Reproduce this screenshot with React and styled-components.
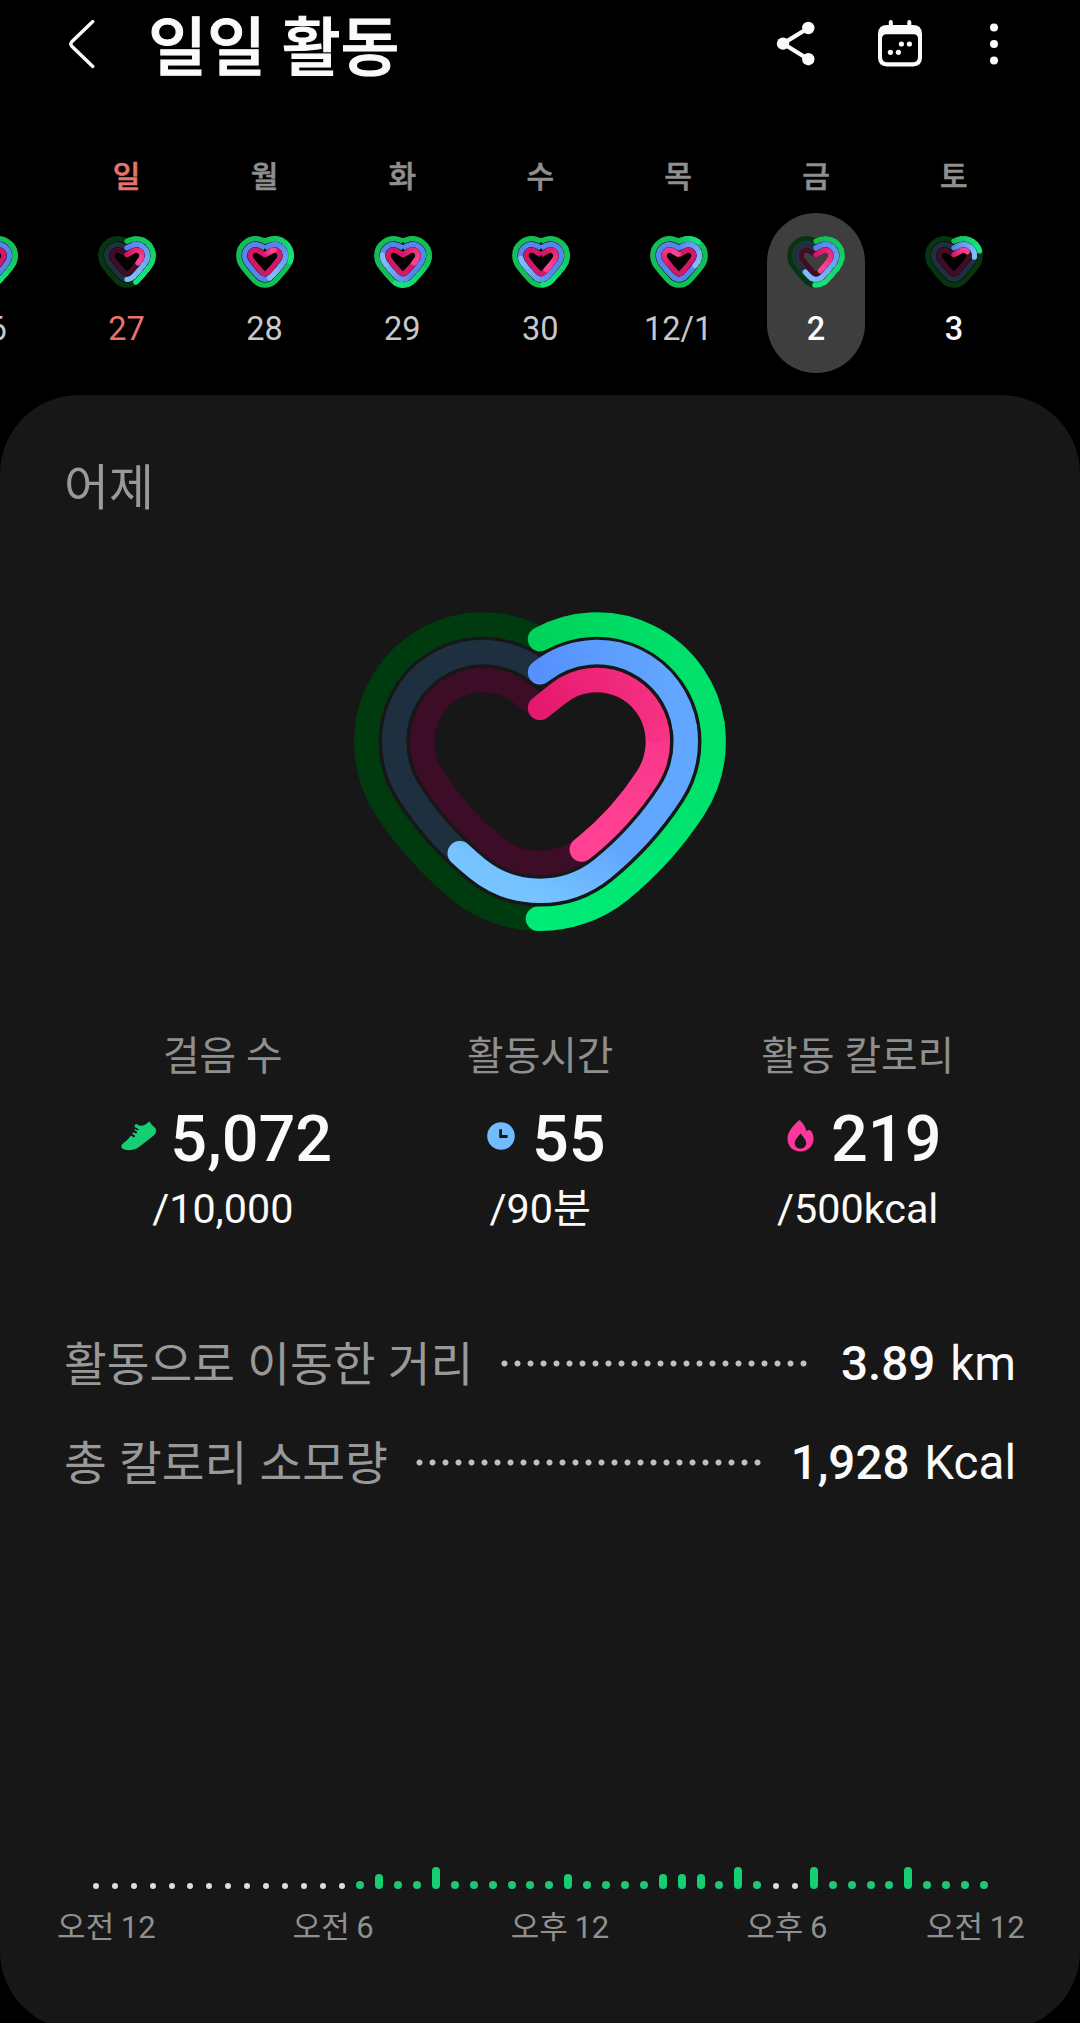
import styled, { createGlobalStyle, css } from 'styled-components';

const COLORS = {
  steps: { track: '#003b0f', from: '#00d259', mid: '#00e06b', to: '#00ea76' },
  time: { track: '#1e303f', from: '#5590fd', mid: '#62a7ff', to: '#76c3ff' },
  calories: { track: '#3d0c27', from: '#e3186c', mid: '#f93386', to: '#ff4093' },
};

const MINI_COLORS = {
  steps: { track: '#07350f', from: [19, 190, 86], to: [22, 226, 124] },
  time: { track: '#202f40', from: [84, 134, 238], to: [125, 190, 250] },
  calories: { track: '#3f0d28', from: [212, 24, 104], to: [250, 66, 146] },
};

const RINGS = ['steps', 'time', 'calories'];

const GRADIENTS = {
  steps: [300, 130, 230, 310],
  time: [266, 240, 232, 306],
  calories: [290, 90, 270, 220],
};

// The outline is a chain of arcs: lobe, side, flank and base.
// Every ring is the same chain moved inwards by its inset.
const BIG_HEART = {
  width: 372,
  height: 320,
  stroke: 24.4,
  lobe: [56.7, 129.2],
  lobeRadius: 129.2,
  sideRadius: 136,
  sideAngle: 33,
  flankRadius: 364,
  flankAngle: 51,
  insets: [12.2, 40.1, 68],
  tips: [27.2, 60.4, 96],
};

const MINI_HEART = {
  width: 58,
  height: 52,
  stroke: 5.3,
  lobe: [9.5, 19.5],
  lobeRadius: 19.5,
  sideRadius: 21,
  sideAngle: 36,
  flankRadius: 125,
  flankAngle: 45,
  insets: [2.8, 8.5, 14.1],
  tips: [5.2, 11.9, 18.7],
};

const polar = ([x, y], r, deg) => [
  x + r * Math.cos((deg * Math.PI) / 180),
  y + r * Math.sin((deg * Math.PI) / 180),
];

const heartPath = (shape, index) => {
  const cx = shape.width / 2;
  const inset = shape.insets[index];
  const tip = shape.tips[index];
  const [dx, cy] = shape.lobe;
  const lobe = shape.lobeRadius - inset;
  const side = shape.sideRadius - inset;
  const flank = shape.flankRadius - inset;

  // straight part between the tip and the lobe
  const dist = Math.hypot(dx, cy - tip);
  let joint = [0, tip];
  if (dist > lobe) {
    const angle = Math.atan2(cy - tip, dx) - Math.asin(lobe / dist);
    const len = Math.sqrt(dist * dist - lobe * lobe);
    joint = [Math.cos(angle) * len, tip + Math.sin(angle) * len];
  }

  const sideCenter = [dx + shape.lobeRadius - shape.sideRadius, cy];
  const a = polar(sideCenter, side, shape.sideAngle);
  const flankCenter = polar(a, -flank, shape.sideAngle);
  const b = polar(flankCenter, flank, shape.flankAngle);
  const base = b[0] / Math.cos((shape.flankAngle * Math.PI) / 180);

  const arc = (r, x, y) => `A${r} ${r} 0 0 1 ${cx + x} ${y}`;

  return [
    `M${cx} ${tip}`,
    `L${cx + joint[0]} ${joint[1]}`,
    arc(lobe, dx + lobe, cy),
    arc(side, a[0], a[1]),
    arc(flank, b[0], b[1]),
    arc(base, -b[0], b[1]),
    arc(flank, -a[0], a[1]),
    arc(side, -dx - lobe, cy),
    arc(lobe, -joint[0], joint[1]),
    `L${cx} ${tip}`,
  ].join('');
};

const BigHeart = ({ progress }) => (
  <HeartSvg width="372" height="320" viewBox="0 0 372 320">
    {RINGS.map((ring, i) => {
      const { track, from, mid, to } = COLORS[ring];
      const [x1, y1, x2, y2] = GRADIENTS[ring];
      const d = heartPath(BIG_HEART, i);

      return (
        <g key={ring} strokeWidth={BIG_HEART.stroke}>
          <defs>
            <radialGradient
              id={`${ring}-head`}
              gradientUnits="userSpaceOnUse"
              cx="180"
              cy={BIG_HEART.tips[i]}
              r="140"
            >
              <stop offset="0" stopColor={from} />
              <stop offset="1" stopColor={mid} />
            </radialGradient>
            <linearGradient
              id={`${ring}-tail`}
              gradientUnits="userSpaceOnUse"
              x1={x1}
              y1={y1}
              x2={x2}
              y2={y2}
            >
              <stop offset="0" stopColor={mid} />
              <stop offset="1" stopColor={to} />
            </linearGradient>
          </defs>
          <path d={d} stroke={track} />
          <path
            d={d}
            pathLength="100"
            stroke={`url(#${ring}-tail)`}
            strokeLinecap="round"
            strokeDasharray={`${progress[i] * 100 - 22} 200`}
            strokeDashoffset="-22"
          />
          <path
            d={d}
            pathLength="100"
            stroke={`url(#${ring}-head)`}
            strokeLinecap="round"
            strokeDasharray="22 200"
          />
        </g>
      );
    })}
  </HeartSvg>
);

const mix = (from, to, t) =>
  `rgb(${from.map((c, i) => Math.round(c + (to[i] - c) * t)).join(',')})`;

const STEPS = 8;

// Progress above 1 means the goal was passed and the ring runs over itself.
const MiniHeart = ({ progress }) => (
  <HeartSvg width="58" height="52" viewBox="0 0 58 52">
    {RINGS.map((ring, i) => {
      const { track, from, to } = MINI_COLORS[ring];
      const d = heartPath(MINI_HEART, i);
      const over = progress[i] > 1;
      const end = (over ? progress[i] - 1 : progress[i]) * 100;
      const start = over ? Math.max(0, end - 35) : 0;
      const part = (end - start) / STEPS;

      return (
        <g key={ring} strokeWidth={MINI_HEART.stroke}>
          <path d={d} stroke={over ? mix(from, to, 0) : track} strokeLinejoin="round" />
          {Array.from({ length: STEPS }, (_, k) => (
            <path
              key={k}
              d={d}
              pathLength="100"
              stroke={mix(from, to, k / (STEPS - 1))}
              strokeLinecap="round"
              strokeDasharray={`${part} 200`}
              strokeDashoffset={-(start + part * k)}
            />
          ))}
        </g>
      );
    })}
  </HeartSvg>
);

const BackIcon = () => (
  <svg width="28" height="52" viewBox="0 0 28 52" fill="none" stroke="#fafafa" strokeWidth="3.4">
    <path d="M24.8 3.6 L3.8 23.8 Q1.8 26 3.8 28.2 L24.8 48.4" strokeLinecap="round" />
  </svg>
);

const ShareIcon = () => (
  <svg width="40" height="46" viewBox="0 0 40 46" fill="#fafafa">
    <path d="M32.3 7 L7 22.6 L32.3 38.2" fill="none" stroke="#fafafa" strokeWidth="4.2" />
    <circle cx="7" cy="22.6" r="6.2" />
    <circle cx="32.3" cy="7" r="6.2" />
    <circle cx="32.3" cy="38.2" r="6.2" />
  </svg>
);

const CalendarIcon = () => (
  <svg width="44" height="48" viewBox="0 0 44 48" fill="#fafafa">
    <path
      fillRule="evenodd"
      d="M9 5H35Q44 5 44 14V37.5Q44 46.4 35 46.4H9Q0 46.4 0 37.5V14Q0 5 9 5ZM8.5 14.2Q4 14.2 4 18.7V37Q4 42.3 9.5 42.3H34.5Q40 42.3 40 37V18.7Q40 14.2 35.5 14.2Z"
    />
    <path d="M12.8 2V9M31.3 2V9" stroke="#fafafa" strokeWidth="4" strokeLinecap="round" />
    <circle cx="23.4" cy="24" r="2.6" />
    <circle cx="31.4" cy="24" r="2.6" />
    <circle cx="12.4" cy="32.3" r="2.6" />
    <circle cx="20.4" cy="32.3" r="2.6" />
  </svg>
);

const MoreIcon = () => (
  <svg width="8" height="42" viewBox="0 0 8 42" fill="#fafafa">
    <circle cx="4" cy="4.4" r="4" />
    <circle cx="4" cy="21" r="4" />
    <circle cx="4" cy="37.4" r="4" />
  </svg>
);

const ShoeIcon = () => (
  <svg width="36" height="30" viewBox="0 0 36 30">
    <path
      fill="#16cf72"
      d="M28.6 .4 C30 3 32.5 5.2 34.4 7.3 C35.6 9 35.2 12.3 33.6 13.7 C29.5 16.8 25.6 19.8 21.6 23.2 C17.6 26.7 14.2 28.8 9.4 29.1 C6 29.3 1.9 28.8 .7 26.8 C.1 25.6 .3 24 1.6 23 C4.6 20.6 7.6 18 9.8 14.8 L12.6 16.2 C13.8 16.6 14.6 15 13.6 14.3 L11.2 12.7 L12.3 11.3 L14.6 12.5 C16 13 16.8 11.4 15.6 10.6 L13.2 9 L14 7.9 L16.2 9.3 C17.3 9.7 18 8.5 17 7.7 L13.7 5.9 C13.2 4.4 14 2.9 15.4 2.9 C18 5 22 5.3 24.6 3.6 C26 2.6 27 .6 28.6 .4Z"
    />
  </svg>
);

const ClockIcon = () => (
  <svg width="28" height="28" viewBox="0 0 28 28">
    <circle cx="14" cy="14" r="13.8" fill="#70bcff" />
    <path d="M13.6 7.2V14.5H20.6" fill="none" stroke="#171717" strokeWidth="2.8" />
  </svg>
);

const FlameIcon = () => (
  <svg width="27" height="32" viewBox="0 0 27 32">
    <path
      fill="#ff379b"
      fillRule="evenodd"
      d="M12 .3 C12.6 .1 13.2 .4 13.6 .9 C16 3.6 18.5 6.5 19.2 10.8 C20.4 10.6 21.6 9.9 22.6 9.9 C24 10 26.6 14 26.6 18.6 C26.6 26.2 20.8 31.5 13.4 31.5 C6 31.5 .5 26.2 .5 18.8 C.5 11.5 6.5 5.6 12 .3ZM13.6 13.6 C10.7 17 7.7 20 7.7 23.2 C7.7 26.3 10.2 28.6 13.4 28.6 C16.6 28.6 19.2 26.3 19.2 23.2 C19.2 20 16.5 17 13.6 13.6Z"
    />
  </svg>
);

const days = [
  { weekday: '', date: '26', progress: [1.5, 1.8, 1.9] },
  { weekday: '일', date: '27', progress: [0.44, 0.5, 0.32], sunday: true },
  { weekday: '월', date: '28', progress: [1.27, 1.46, 1.12] },
  { weekday: '화', date: '29', progress: [1.55, 1.78, 1.32] },
  { weekday: '수', date: '30', progress: [1.49, 1.75, 1.42] },
  { weekday: '목', date: '12/1', progress: [1.13, 1.32, 1.99] },
  { weekday: '금', date: '2', progress: [0.507, 0.611, 0.438], selected: true, bold: true },
  { weekday: '토', date: '3', progress: [0.2, 0.24, 0.17], bold: true },
];

const stats = [
  { label: '걸음 수', value: '5,072', goal: '/10,000', icon: <ShoeIcon /> },
  { label: '활동시간', value: '55', goal: '/90분', icon: <ClockIcon /> },
  { label: '활동 칼로리', value: '219', goal: '/500kcal', icon: <FlameIcon /> },
];

const details = [
  { label: '활동으로 이동한 거리', value: '3.89', unit: 'km', dots: 24 },
  { label: '총 칼로리 소모량', value: '1,928', unit: 'Kcal', dots: 27 },
];

// one entry per half hour: 0 none, 1 low, 2 medium, 3 high
const activity = [
  0, 0, 0, 0, 0, 0, 0, 0, 0, 0, 0, 0, 0, 0, 1, 2, 1, 1, 3, 1, 1, 1, 1, 1,
  1, 2, 1, 1, 1, 1, 2, 2, 2, 1, 3, 1, 0, 0, 3, 1, 1, 1, 1, 3, 1, 1, 1, 1,
];

const hours = ['오전 12', '오전 6', '오후 12', '오후 6', '오전 12'];

const App = () => {
  return (
    <Page>
      <GlobalStyle />
      <Header>
        <BackIcon />
        <Title>일일 활동</Title>
        <Actions>
          <ShareIcon />
          <CalendarIcon />
          <MoreIcon />
        </Actions>
      </Header>
      <Week>
        {days.map((day) => (
          <Day key={day.date}>
            <Weekday $sunday={day.sunday}>{day.weekday}</Weekday>
            <Pill $selected={day.selected}>
              <MiniHeart progress={day.progress} />
              <DateText $sunday={day.sunday} $bold={day.bold}>
                {day.date}
              </DateText>
            </Pill>
          </Day>
        ))}
      </Week>
      <Card>
        <CardTitle>어제</CardTitle>
        <HeartWrapper>
          <BigHeart progress={[0.502, 0.607, 0.435]} />
        </HeartWrapper>
        <Stats>
          {stats.map((stat) => (
            <Stat key={stat.label}>
              <StatLabel>{stat.label}</StatLabel>
              <StatValue>
                <StatIcon>{stat.icon}</StatIcon>
                {stat.value}
              </StatValue>
              <StatGoal>{stat.goal}</StatGoal>
            </Stat>
          ))}
        </Stats>
        <Details>
          {details.map((row) => (
            <DetailRow key={row.label}>
              <DetailLabel>{row.label}</DetailLabel>
              <Dots $count={row.dots} />
              <DetailValue>
                {row.value} <span>{row.unit}</span>
              </DetailValue>
            </DetailRow>
          ))}
        </Details>
        <Chart>
          <Bars>
            {activity.map((level, i) => (
              <Bar key={i} $level={level} />
            ))}
          </Bars>
          <Hours>
            {hours.map((hour, i) => (
              <span key={i}>{hour}</span>
            ))}
          </Hours>
        </Chart>
      </Card>
    </Page>
  );
};

const GlobalStyle = createGlobalStyle`
  body {
    margin: 0;
    background: #000;
  }

  * {
    box-sizing: border-box;
  }

  svg {
    display: block;
    flex-shrink: 0;
  }
`;

const Page = styled.div`
  width: 1080px;
  height: 2023px;
  overflow: hidden;
  background: #000;
  color: #fafafa;
  font-family: Roboto, 'Noto Sans CJK KR', sans-serif;
  white-space: nowrap;
`;

const Header = styled.header`
  display: flex;
  align-items: center;
  height: 88px;
  padding: 0 82px 0 68px;
`;

const Title = styled.h1`
  margin: 9px 0 0 52px;
  font-size: 64px;
  line-height: 90px;
  font-weight: 500;
  -webkit-text-stroke: 1px #fafafa;
`;

const Actions = styled.div`
  display: flex;
  align-items: center;
  margin-left: auto;

  svg:nth-child(2) {
    margin: 0 68px 0 62px;
  }
`;

const Week = styled.div`
  display: grid;
  grid-template-columns: repeat(8, 137.9px);
  height: 307px;
  padding-top: 59px;
  margin-left: -80.3px;
`;

const Day = styled.div`
  display: flex;
  flex-direction: column;
  align-items: center;
`;

const Weekday = styled.div`
  height: 66px;
  font-size: 30px;
  line-height: 60px;
  font-weight: 500;
  color: ${(p) => (p.$sunday ? '#e5746c' : '#8f8f8f')};
  -webkit-text-stroke: 0.6px currentColor;
`;

const Pill = styled.div`
  display: flex;
  flex-direction: column;
  align-items: center;
  width: 98px;
  height: 160px;
  padding-top: 23px;
  border-radius: 49px;
  background: ${(p) => (p.$selected ? '#3e3e3e' : 'transparent')};

  svg {
    margin-left: 1px;
  }
`;

const DateText = styled.div`
  margin-top: 21px;
  font-size: 32.5px;
  line-height: 40px;
  color: ${(p) => (p.$sunday ? '#e5746c' : '#c8c8c8')};

  ${(p) =>
    p.$bold &&
    css`
      font-weight: 500;
      color: #fafafa;
    `}
`;

const HeartSvg = styled.svg`
  fill: none;
`;

const Card = styled.main`
  display: flex;
  flex-direction: column;
  height: 1635px;
  padding: 0 64px 77px;
  border-radius: 79px;
  background: #171717;
`;

const CardTitle = styled.h2`
  margin: 59px 0 0;
  font-size: 49px;
  line-height: 70px;
  font-weight: 400;
  color: #999;
`;

const HeartWrapper = styled.div`
  display: flex;
  justify-content: center;
  margin-top: 88px;
`;

const Stats = styled.div`
  display: grid;
  grid-template-columns: repeat(3, 317.5px);
  margin-top: 95px;
`;

const Stat = styled.div`
  display: flex;
  flex-direction: column;
  align-items: center;
`;

const StatLabel = styled.div`
  font-size: 39.8px;
  line-height: 60px;
  color: #8f8f8f;
`;

const StatValue = styled.div`
  display: flex;
  align-items: center;
  margin-top: 12px;
  padding-left: 8px;
  font-size: 64.8px;
  line-height: 80px;
  font-weight: 500;
`;

const StatIcon = styled.span`
  display: flex;
  justify-content: center;
  width: 36px;
  margin: 0 13px 6px 0;
`;

const StatGoal = styled.div`
  font-size: 41.3px;
  line-height: 60px;
`;

const Details = styled.div`
  display: flex;
  flex-direction: column;
  gap: 30px;
  margin-top: 92px;
`;

const DetailRow = styled.div`
  display: flex;
  align-items: center;
  height: 69px;
`;

const DetailLabel = styled.div`
  font-size: 46.5px;
  line-height: 69px;
  word-spacing: 0.6px;
  color: #999;
`;

const Dots = styled.div`
  width: ${(p) => p.$count * 13}px;
  height: 13px;
  margin: 0 auto 5px 25px;
  background: radial-gradient(circle, #c0c0c0 2.6px, transparent 3.4px) 0 0 / 13px 13px;
`;

const DetailValue = styled.div`
  margin-bottom: 3px;
  font-size: 47.6px;
  line-height: 69px;
  font-weight: 500;
  word-spacing: 3px;

  span {
    font-weight: 400;
  }
`;

const Chart = styled.div`
  margin-top: auto;
`;

const Bars = styled.div`
  display: flex;
  justify-content: space-between;
  align-items: flex-end;
  height: 30px;
  padding: 0 28px;
`;

const barHeights = [6.5, 8.5, 15, 22];

const Bar = styled.div`
  width: ${(p) => (p.$level ? 8 : 6)}px;
  height: ${(p) => barHeights[p.$level]}px;
  margin: 0 ${(p) => (p.$level ? 0 : 1)}px;
  border-radius: 4px;
  background: ${(p) => ['#dedede', '#20c676', '#16cf72', '#16cf72'][p.$level]};
`;

const Hours = styled.div`
  display: grid;
  grid-template-columns: repeat(4, 226.8px) 150.4px;
  margin: 14px 0 0 -71px;
  font-size: 31px;
  line-height: 50px;
  text-align: center;
  word-spacing: -1px;
  color: #909090;
`;

export default App;
